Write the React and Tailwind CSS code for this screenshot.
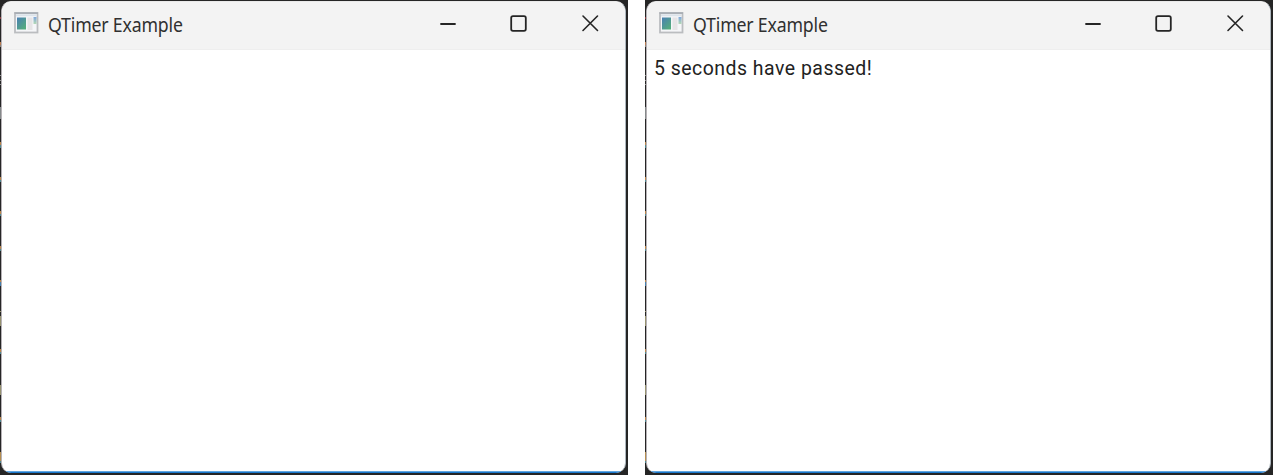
import React from 'react';

// Slivers of the desktop behind the window: [top, height, colour]
const specks = [
  [17, 2, '#8a3a3f'], [42, 3, '#b97a4e'], [45, 2, '#8b8178'],
  [75, 1, '#8f8f8f'], [80, 1, '#8f8f8f'], [84, 1, '#8f8f8f'],
  [107, 12, '#85898a'], [142, 3, '#b98348'], [145, 3, '#4f8790'],
  [177, 3, '#b98348'], [180, 2, '#4f8790'], [211, 3, '#b98348'],
  [214, 2, '#4f8790'], [246, 3, '#b98348'], [249, 2, '#4f8790'],
  [280, 2, '#b98348'], [282, 4, '#447fae'], [311, 1, '#96926f'],
  [316, 10, '#96926f'], [349, 3, '#b98348'], [352, 2, '#4f8790'],
  [385, 10, '#96926f'], [417, 3, '#b98348'], [420, 2, '#4f8790'],
  [452, 9, '#b58d4e'], [461, 2, '#4f8790'],
];

function Edge() {
  return (
    <div className="w-px shrink-0">
      {specks.map(([top, height, color], i) => {
        const prev = i ? specks[i - 1][0] + specks[i - 1][1] : 0;
        return (
          <div key={top}>
            <div style={{ height: top - prev }} />
            <div style={{ height, background: color }} />
          </div>
        );
      })}
    </div>
  );
}

function AppIcon() {
  return (
    <svg width="25" height="22" viewBox="0 0 25 22" className="shrink-0">
      <defs>
        <linearGradient id="pane" x1="0" y1="0" x2="0.8" y2="1">
          <stop offset="0" stopColor="#4a7fb4" />
          <stop offset="1" stopColor="#55ad7c" />
        </linearGradient>
        <linearGradient id="side" x1="0" y1="0" x2="0" y2="1">
          <stop offset="0" stopColor="#7fa6dc" />
          <stop offset="1" stopColor="#b5dab5" />
        </linearGradient>
      </defs>
      <rect x="1" y="1" width="22.5" height="19.5" fill="#f5f6f8" stroke="#bbbdc0" strokeWidth="1.8" />
      <path d="M0.5 1.2H24" stroke="#a9aeb5" strokeWidth="1.8" />
      <path d="M2 3.3H22.5" stroke="#dce3ea" strokeWidth="2" />
      <rect x="3" y="5.5" width="9" height="12" fill="url(#pane)" />
      <rect x="13.5" y="5.5" width="5" height="12.5" fill="#e6e4e6" />
      <rect x="19.5" y="5" width="3" height="7" fill="url(#side)" />
    </svg>
  );
}

function WindowControls() {
  return (
    <svg
      width="160"
      height="20"
      viewBox="0 0 160 20"
      className="mt-[10px] mr-[26px] ml-auto"
      fill="none"
      stroke="#252525"
      strokeWidth="1.8"
      strokeLinecap="round"
    >
      <path d="M2 12H16" />
      <rect x="72.2" y="4.2" width="14.6" height="14.6" rx="1.8" />
      <path d="M144 4L158.5 18.5M158.5 4L144 18.5" strokeWidth="1.6" />
    </svg>
  );
}

function Window({ message }) {
  return (
    <div className="flex h-[475px] w-[628px] shrink-0 bg-[#252525]">
      <Edge />
      <div className="mt-px mr-[2px] mb-[2px] flex min-w-0 flex-1 flex-col overflow-hidden rounded-[10px] border-x border-t border-t-[#e9e9e9] border-r-[#aeb7be] border-l-[#b5b1b5] bg-white">
        <div className="flex h-12 shrink-0 items-start border-b border-[#eeeeee] bg-[#f3f3f3] pl-3">
          <div className="mt-[10px]"><AppIcon /></div>
          <div className="mt-[10px] ml-[9px] w-[160px] origin-left scale-x-[0.932] whitespace-nowrap font-['Noto_Sans',sans-serif] text-[19px] leading-[26px] tracking-[-0.2px] text-[#303030]">
            QTimer Example
          </div>
          <WindowControls />
        </div>
        <div className="flex-1 pt-1 pl-[7px] font-['Roboto',sans-serif] text-[20px] leading-[29px] text-[#222222]">
          {message && (
            <span className="inline-block origin-left scale-x-[0.973] whitespace-nowrap tracking-[0.5px]">{message}</span>
          )}
        </div>
        <div className="h-[2px] shrink-0 border-t border-[#64a6df] bg-[#1976c9]" />
      </div>
    </div>
  );
}

export default function App() {
  return (
    <main className="flex h-[475px] w-[1273px] gap-[17px] overflow-hidden bg-white">
      <Window />
      <Window message="5 seconds have passed!" />
    </main>
  );
}
